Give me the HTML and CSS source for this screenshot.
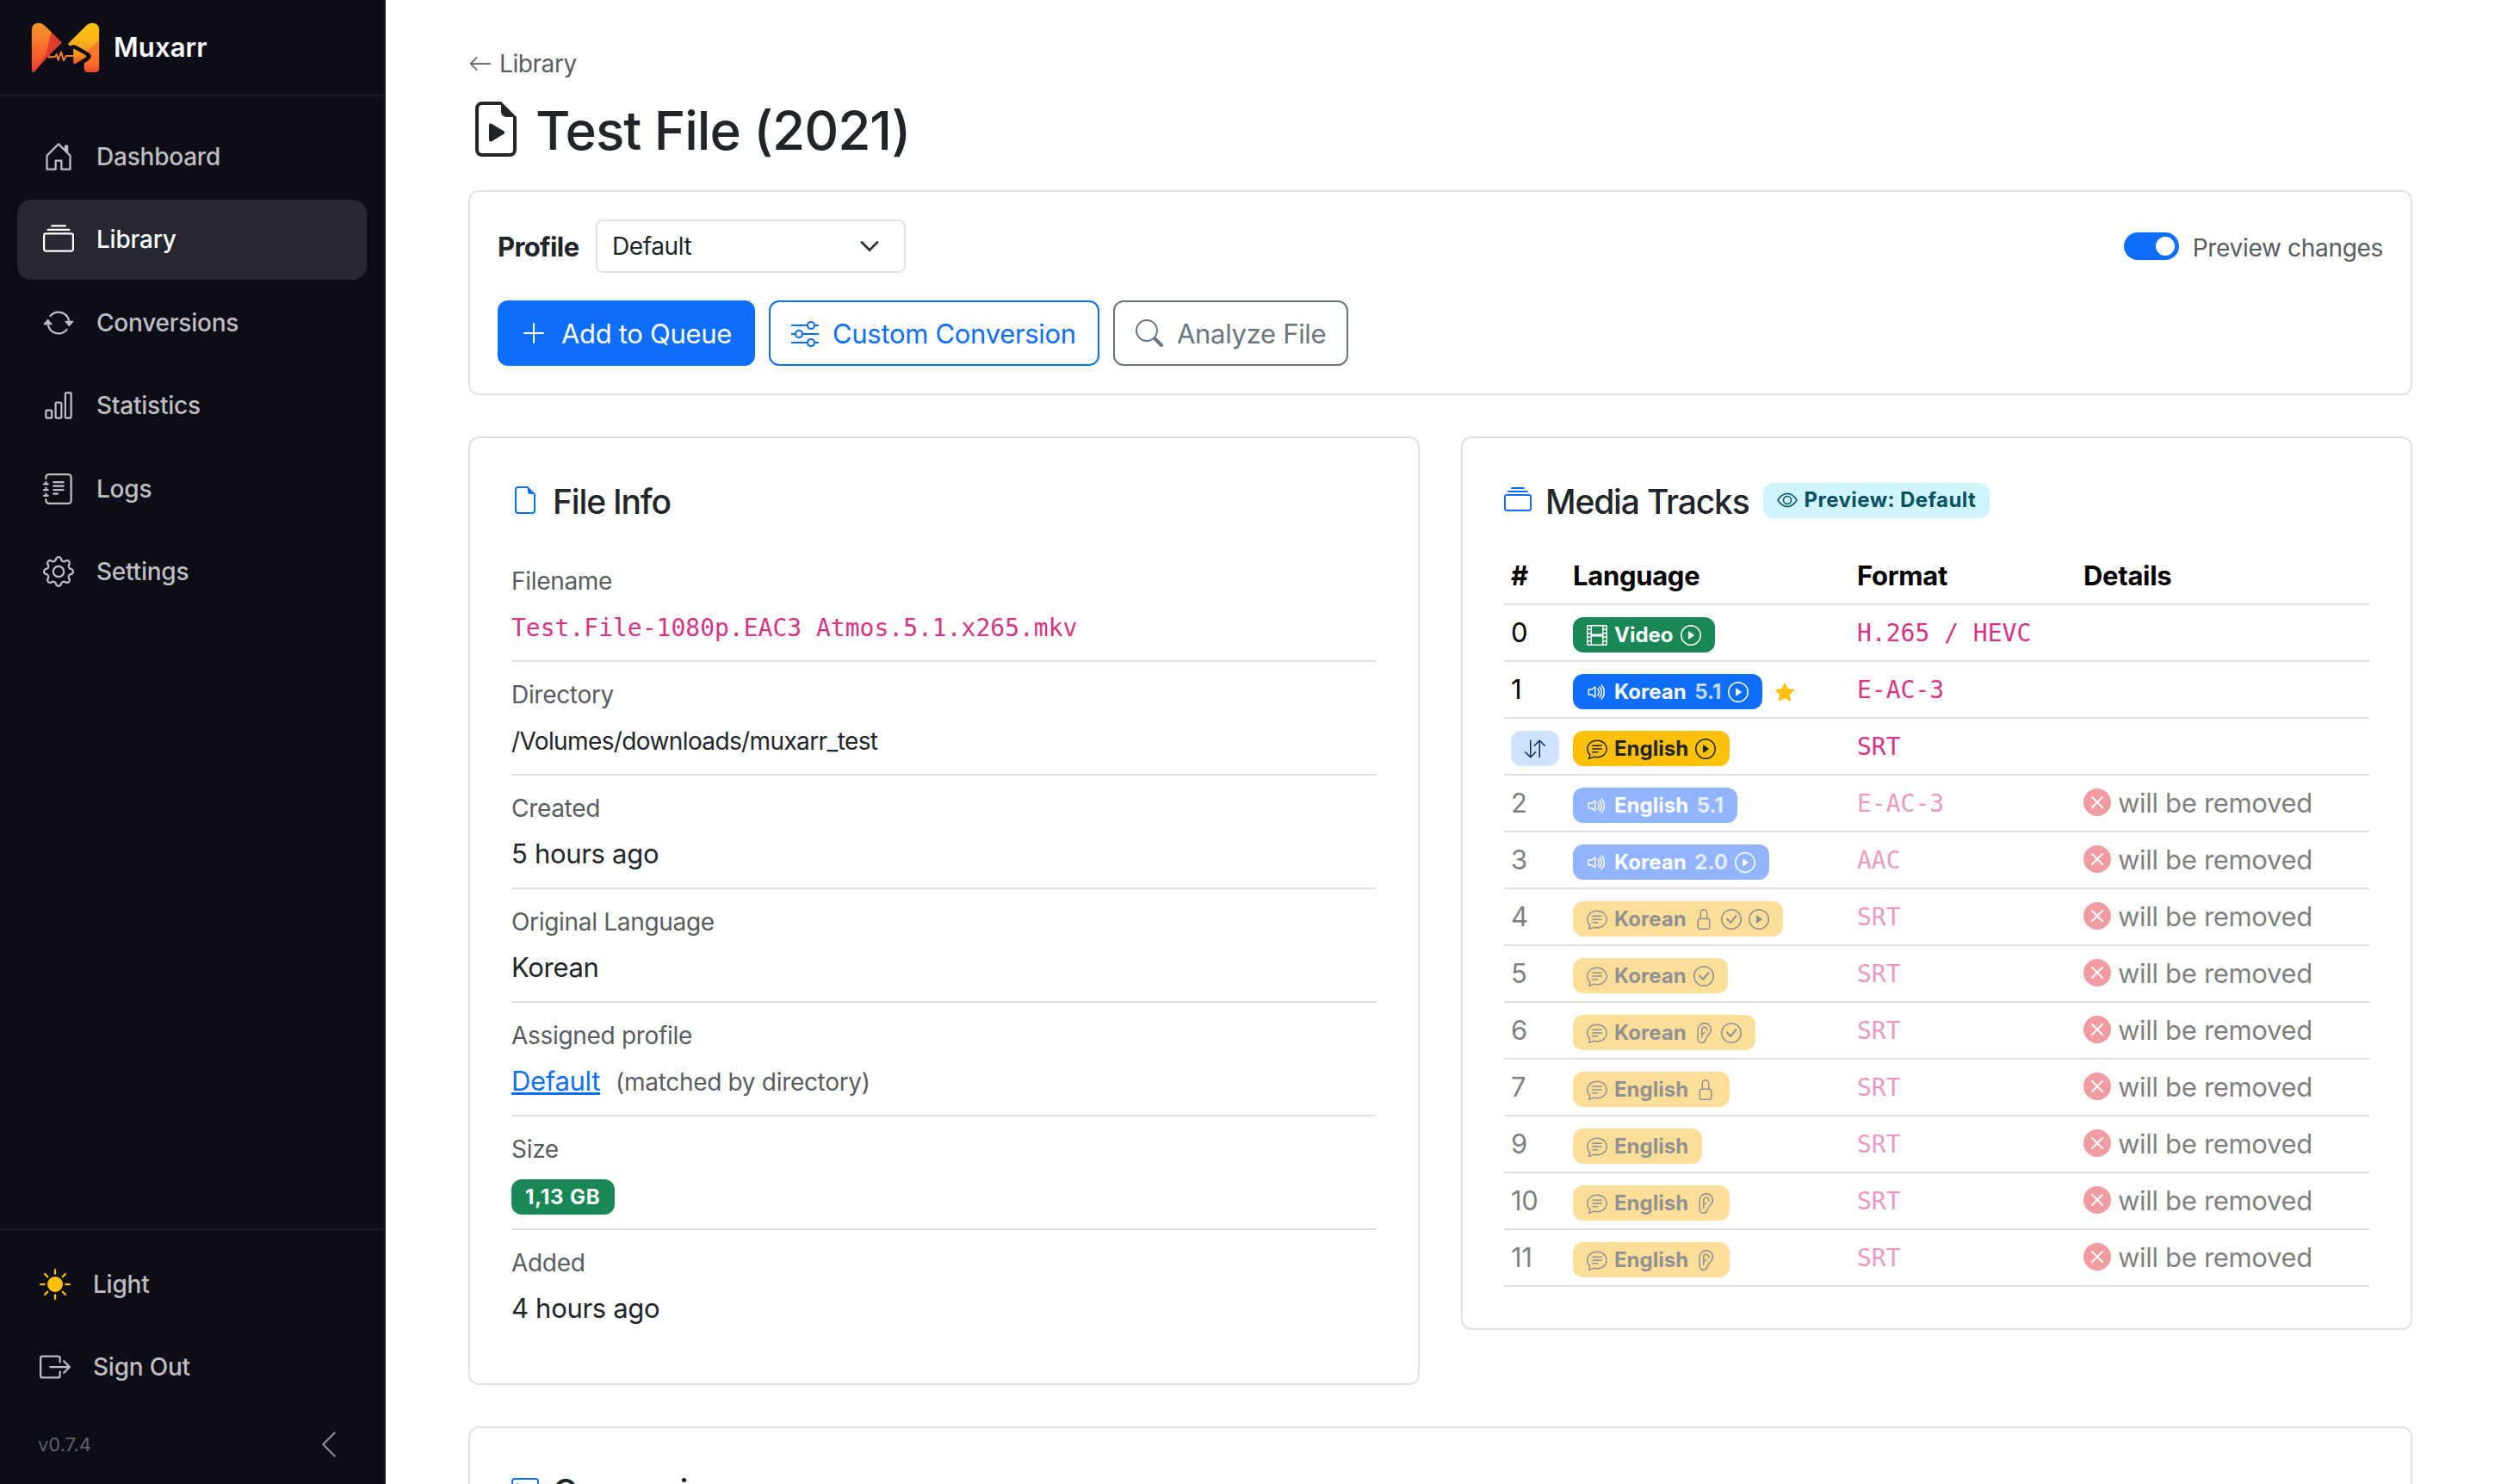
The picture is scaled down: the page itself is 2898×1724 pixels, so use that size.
FILE: index.html
```html
<!DOCTYPE html>
<html lang="en">
<head>
    <meta charset="UTF-8">
    <meta name="viewport" content="width=device-width, initial-scale=1.0">
    <title>Test File (2021) - Muxarr</title>
    <link rel="stylesheet" href="styles.css">
</head>
<body>
    <!-- icons -->
    <svg class="sprite" xmlns="http://www.w3.org/2000/svg">
        <symbol id="house" viewBox="0 0 16 16"><path d="M8.354 1.146a.5.5 0 0 0-.708 0l-6 6A.5.5 0 0 0 1.5 7.5v7a.5.5 0 0 0 .5.5h4.5a.5.5 0 0 0 .5-.5v-4h2v4a.5.5 0 0 0 .5.5H14a.5.5 0 0 0 .5-.5v-7a.5.5 0 0 0-.146-.354L13 5.793V2.5a.5.5 0 0 0-.5-.5h-1a.5.5 0 0 0-.5.5v1.293zM2.5 14V7.707l5.5-5.5 5.5 5.5V14H10v-4a.5.5 0 0 0-.5-.5h-3a.5.5 0 0 0-.5.5v4z"/></symbol>
        <symbol id="collection" viewBox="0 0 16 16"><path d="M2.5 3.5a.5.5 0 0 1 0-1h11a.5.5 0 0 1 0 1zm2-2a.5.5 0 0 1 0-1h7a.5.5 0 0 1 0 1zM0 13a1.5 1.5 0 0 0 1.5 1.5h13A1.5 1.5 0 0 0 16 13V6a1.5 1.5 0 0 0-1.5-1.5h-13A1.5 1.5 0 0 0 0 6zm1.5.5A.5.5 0 0 1 1 13V6a.5.5 0 0 1 .5-.5h13a.5.5 0 0 1 .5.5v7a.5.5 0 0 1-.5.5z"/></symbol>
        <symbol id="repeat" viewBox="0 0 16 16"><path d="M11.534 7h3.932a.25.25 0 0 1 .192.41l-1.966 2.36a.25.25 0 0 1-.384 0l-1.966-2.36a.25.25 0 0 1 .192-.41m-11 2h3.932a.25.25 0 0 0 .192-.41L2.692 6.23a.25.25 0 0 0-.384 0L.342 8.59A.25.25 0 0 0 .534 9"/><path d="M8 3c-1.552 0-2.94.707-3.857 1.818a.5.5 0 1 1-.771-.636A6.002 6.002 0 0 1 13.917 7H12.9A5 5 0 0 0 8 3M3.1 9a5.002 5.002 0 0 0 8.757 2.182.5.5 0 1 1 .771.636A6.002 6.002 0 0 1 2.083 9z"/></symbol>
        <symbol id="bars" viewBox="0 0 16 16"><path d="M4 11H2v3h2zm5-4H7v7h2zm5-5v12h-2V2zm-2-1a1 1 0 0 0-1 1v12a1 1 0 0 0 1 1h2a1 1 0 0 0 1-1V2a1 1 0 0 0-1-1zM6 7a1 1 0 0 1 1-1h2a1 1 0 0 1 1 1v7a1 1 0 0 1-1 1H7a1 1 0 0 1-1-1zm-5 4a1 1 0 0 1 1-1h2a1 1 0 0 1 1 1v3a1 1 0 0 1-1 1H2a1 1 0 0 1-1-1z"/></symbol>
        <symbol id="journal" viewBox="0 0 16 16"><path d="M5 10.5a.5.5 0 0 1 .5-.5h2a.5.5 0 0 1 0 1h-2a.5.5 0 0 1-.5-.5m0-2a.5.5 0 0 1 .5-.5h5a.5.5 0 0 1 0 1h-5a.5.5 0 0 1-.5-.5m0-2a.5.5 0 0 1 .5-.5h5a.5.5 0 0 1 0 1h-5a.5.5 0 0 1-.5-.5m0-2a.5.5 0 0 1 .5-.5h5a.5.5 0 0 1 0 1h-5a.5.5 0 0 1-.5-.5"/><path d="M3 0h10a2 2 0 0 1 2 2v12a2 2 0 0 1-2 2H3a2 2 0 0 1-2-2v-1h1v1a1 1 0 0 0 1 1h10a1 1 0 0 0 1-1V2a1 1 0 0 0-1-1H3a1 1 0 0 0-1 1v1H1V2a2 2 0 0 1 2-2"/><path d="M1 5v-.5a.5.5 0 0 1 1 0V5h.5a.5.5 0 0 1 0 1h-2a.5.5 0 0 1 0-1zm0 3v-.5a.5.5 0 0 1 1 0V8h.5a.5.5 0 0 1 0 1h-2a.5.5 0 0 1 0-1zm0 3v-.5a.5.5 0 0 1 1 0v.5h.5a.5.5 0 0 1 0 1h-2a.5.5 0 0 1 0-1z"/></symbol>
        <symbol id="gear" viewBox="0 0 16 16"><path d="M8 4.754a3.246 3.246 0 1 0 0 6.492 3.246 3.246 0 0 0 0-6.492M5.754 8a2.246 2.246 0 1 1 4.492 0 2.246 2.246 0 0 1-4.492 0"/><path d="M9.796 1.343c-.527-1.79-3.065-1.79-3.592 0l-.094.319a.873.873 0 0 1-1.255.52l-.292-.16c-1.64-.892-3.433.902-2.54 2.541l.159.292a.873.873 0 0 1-.52 1.255l-.319.094c-1.79.527-1.79 3.065 0 3.592l.319.094a.873.873 0 0 1 .52 1.255l-.16.292c-.892 1.64.901 3.434 2.541 2.54l.292-.159a.873.873 0 0 1 1.255.52l.094.319c.527 1.79 3.065 1.79 3.592 0l.094-.319a.873.873 0 0 1 1.255-.52l.292.16c1.64.893 3.434-.902 2.54-2.541l-.159-.292a.873.873 0 0 1 .52-1.255l.319-.094c1.79-.527 1.79-3.065 0-3.592l-.319-.094a.873.873 0 0 1-.52-1.255l.16-.292c.893-1.64-.902-3.433-2.541-2.54l-.292.159a.873.873 0 0 1-1.255-.52zm-2.633.283c.246-.835 1.428-.835 1.674 0l.094.319a1.873 1.873 0 0 0 2.693 1.115l.291-.16c.764-.415 1.6.42 1.184 1.185l-.159.292a1.873 1.873 0 0 0 1.116 2.692l.318.094c.835.246.835 1.428 0 1.674l-.319.094a1.873 1.873 0 0 0-1.115 2.693l.16.291c.415.764-.42 1.6-1.185 1.184l-.291-.159a1.873 1.873 0 0 0-2.693 1.116l-.094.318c-.246.835-1.428.835-1.674 0l-.094-.319a1.873 1.873 0 0 0-2.692-1.115l-.292.16c-.764.415-1.6-.42-1.184-1.185l.159-.291A1.873 1.873 0 0 0 1.945 8.93l-.319-.094c-.835-.246-.835-1.428 0-1.674l.319-.094A1.873 1.873 0 0 0 3.06 4.377l-.16-.292c-.415-.764.42-1.6 1.185-1.184l.292.159a1.873 1.873 0 0 0 2.692-1.115z"/></symbol>
        <symbol id="sun" viewBox="0 0 16 16"><path d="M8 12a4 4 0 1 0 0-8 4 4 0 0 0 0 8M8 0a.5.5 0 0 1 .5.5v2a.5.5 0 0 1-1 0v-2A.5.5 0 0 1 8 0m0 13a.5.5 0 0 1 .5.5v2a.5.5 0 0 1-1 0v-2A.5.5 0 0 1 8 13m8-5a.5.5 0 0 1-.5.5h-2a.5.5 0 0 1 0-1h2a.5.5 0 0 1 .5.5M3 8a.5.5 0 0 1-.5.5h-2a.5.5 0 0 1 0-1h2A.5.5 0 0 1 3 8m10.657-5.657a.5.5 0 0 1 0 .707l-1.414 1.415a.5.5 0 1 1-.707-.708l1.414-1.414a.5.5 0 0 1 .707 0m-9.193 9.193a.5.5 0 0 1 0 .707L3.05 13.657a.5.5 0 0 1-.707-.707l1.414-1.414a.5.5 0 0 1 .707 0m9.193 2.121a.5.5 0 0 1-.707 0l-1.414-1.414a.5.5 0 0 1 .707-.707l1.414 1.414a.5.5 0 0 1 0 .707M4.464 4.465a.5.5 0 0 1-.707 0L2.343 3.05a.5.5 0 1 1 .707-.707l1.414 1.414a.5.5 0 0 1 0 .708"/></symbol>
        <symbol id="logout" viewBox="0 0 16 16"><path d="M10 12.5a.5.5 0 0 1-.5.5h-8a.5.5 0 0 1-.5-.5v-9a.5.5 0 0 1 .5-.5h8a.5.5 0 0 1 .5.5v2a.5.5 0 0 0 1 0v-2A1.5 1.5 0 0 0 9.5 2h-8A1.5 1.5 0 0 0 0 3.5v9A1.5 1.5 0 0 0 1.5 14h8a1.5 1.5 0 0 0 1.5-1.5v-2a.5.5 0 0 0-1 0z"/><path d="M15.854 8.354a.5.5 0 0 0 0-.708l-3-3a.5.5 0 0 0-.708.708L14.293 7.5H5.5a.5.5 0 0 0 0 1h8.793l-2.147 2.146a.5.5 0 0 0 .708.708z"/></symbol>
        <symbol id="chevron-left" viewBox="0 0 16 16"><path d="M11.354 1.646a.5.5 0 0 1 0 .708L5.707 8l5.647 5.646a.5.5 0 0 1-.708.708l-6-6a.5.5 0 0 1 0-.708l6-6a.5.5 0 0 1 .708 0"/></symbol>
        <symbol id="arrow-left" viewBox="0 0 16 16"><path d="M15 8a.5.5 0 0 0-.5-.5H2.707l3.147-3.146a.5.5 0 1 0-.708-.708l-4 4a.5.5 0 0 0 0 .708l4 4a.5.5 0 0 0 .708-.708L2.707 8.5H14.5A.5.5 0 0 0 15 8"/></symbol>
        <symbol id="file-play" viewBox="0 0 16 16"><path d="M6 6.883v4.234a.5.5 0 0 0 .757.429l3.528-2.117a.5.5 0 0 0 0-.858L6.757 6.454a.5.5 0 0 0-.757.43z"/><path d="M14 14V4.5L9.5 0H4a2 2 0 0 0-2 2v12a2 2 0 0 0 2 2h8a2 2 0 0 0 2-2M9.5 3A1.5 1.5 0 0 0 11 4.5h2V14a1 1 0 0 1-1 1H4a1 1 0 0 1-1-1V2a1 1 0 0 1 1-1h5.5z"/></symbol>
        <symbol id="file" viewBox="0 0 16 16"><path d="M14 4.5V14a2 2 0 0 1-2 2H4a2 2 0 0 1-2-2V2a2 2 0 0 1 2-2h5.5zm-3 0A1.5 1.5 0 0 1 9.5 3V1H4a1 1 0 0 0-1 1v12a1 1 0 0 0 1 1h8a1 1 0 0 0 1-1V4.5z"/></symbol>
        <symbol id="plus" viewBox="0 0 16 16"><path d="M8 2a.5.5 0 0 1 .5.5v5h5a.5.5 0 0 1 0 1h-5v5a.5.5 0 0 1-1 0v-5h-5a.5.5 0 0 1 0-1h5v-5A.5.5 0 0 1 8 2"/></symbol>
        <symbol id="sliders" viewBox="0 0 16 16"><path fill-rule="evenodd" d="M11.5 2a1.5 1.5 0 1 0 0 3 1.5 1.5 0 0 0 0-3M9.05 3a2.5 2.5 0 0 1 4.9 0H16v1h-2.05a2.5 2.5 0 0 1-4.9 0H0V3zM4.5 7a1.5 1.5 0 1 0 0 3 1.5 1.5 0 0 0 0-3M2.05 8a2.5 2.5 0 0 1 4.9 0H16v1H6.95a2.5 2.5 0 0 1-4.9 0H0V8zm9.45 4a1.5 1.5 0 1 0 0 3 1.5 1.5 0 0 0 0-3m-2.45 1a2.5 2.5 0 0 1 4.9 0H16v1h-2.05a2.5 2.5 0 0 1-4.9 0H0v-1z"/></symbol>
        <symbol id="search" viewBox="0 0 16 16"><path d="M11.742 10.344a6.5 6.5 0 1 0-1.397 1.398h-.001q.044.06.098.115l3.85 3.85a1 1 0 0 0 1.415-1.414l-3.85-3.85a1 1 0 0 0-.115-.1zM12 6.5a5.5 5.5 0 1 1-11 0 5.5 5.5 0 0 1 11 0"/></symbol>
        <symbol id="eye" viewBox="0 0 16 16"><path d="M16 8s-3-5.5-8-5.5S0 8 0 8s3 5.5 8 5.5S16 8 16 8M1.173 8a13 13 0 0 1 1.66-2.043C4.12 4.668 5.88 3.5 8 3.5s3.879 1.168 5.168 2.457A13 13 0 0 1 14.828 8q-.086.13-.195.288c-.335.48-.83 1.12-1.465 1.755C11.879 11.332 10.119 12.5 8 12.5s-3.879-1.168-5.168-2.457A13 13 0 0 1 1.172 8z"/><path d="M8 5.5a2.5 2.5 0 1 0 0 5 2.5 2.5 0 0 0 0-5M4.5 8a3.5 3.5 0 1 1 7 0 3.5 3.5 0 0 1-7 0"/></symbol>
        <symbol id="film" viewBox="0 0 16 16"><path d="M0 1a1 1 0 0 1 1-1h14a1 1 0 0 1 1 1v14a1 1 0 0 1-1 1H1a1 1 0 0 1-1-1zm4 0v6h8V1zm8 8H4v6h8zM1 1v2h2V1zm2 3H1v2h2zM1 7v2h2V7zm2 3H1v2h2zm-2 3v2h2v-2zM15 1h-2v2h2zm-2 3v2h2V4zm2 3h-2v2h2zm-2 3v2h2v-2zm2 3h-2v2h2z"/></symbol>
        <symbol id="play" viewBox="0 0 16 16"><path d="M8 15A7 7 0 1 1 8 1a7 7 0 0 1 0 14m0 1A8 8 0 1 0 8 0a8 8 0 0 0 0 16"/><path d="M6.271 5.055a.5.5 0 0 1 .52.038l3.5 2.5a.5.5 0 0 1 0 .814l-3.5 2.5A.5.5 0 0 1 6 10.5v-5a.5.5 0 0 1 .271-.445"/></symbol>
        <symbol id="check" viewBox="0 0 16 16"><path d="M8 15A7 7 0 1 1 8 1a7 7 0 0 1 0 14m0 1A8 8 0 1 0 8 0a8 8 0 0 0 0 16"/><path d="m10.97 4.97-.02.022-3.473 4.425-2.093-2.094a.75.75 0 0 0-1.06 1.06L6.97 11.03a.75.75 0 0 0 1.079-.02l3.992-4.99a.75.75 0 0 0-1.071-1.05"/></symbol>
        <symbol id="volume" viewBox="0 0 16 16"><path d="M11.536 14.01A8.47 8.47 0 0 0 14.026 8a8.47 8.47 0 0 0-2.49-6.01l-.708.707A7.48 7.48 0 0 1 13.025 8c0 2.071-.84 3.946-2.197 5.303z"/><path d="M10.121 12.596A6.48 6.48 0 0 0 12.025 8a6.48 6.48 0 0 0-1.904-4.596l-.707.707A5.48 5.48 0 0 1 11.025 8a5.48 5.48 0 0 1-1.61 3.89z"/><path d="M10.025 8a4.5 4.5 0 0 1-1.318 3.182L8 10.475A3.5 3.5 0 0 0 9.025 8c0-.966-.392-1.841-1.025-2.475l.707-.707A4.5 4.5 0 0 1 10.025 8M7 4a.5.5 0 0 0-.812-.39L3.825 5.5H1.5A.5.5 0 0 0 1 6v4a.5.5 0 0 0 .5.5h2.325l2.363 1.89A.5.5 0 0 0 7 12zM4.312 6.39 6 5.04v5.92L4.312 9.61A.5.5 0 0 0 4 9.5H2v-3h2a.5.5 0 0 0 .312-.11"/></symbol>
        <symbol id="chat" viewBox="0 0 16 16"><path d="M2.678 11.894a1 1 0 0 1 .287.801 11 11 0 0 1-.398 2c1.395-.323 2.247-.697 2.634-.893a1 1 0 0 1 .71-.074A8 8 0 0 0 8 14c3.996 0 7-2.807 7-6s-3.004-6-7-6-7 2.808-7 6c0 1.468.617 2.83 1.678 3.894m-.493 3.905a22 22 0 0 1-.713.129c-.2.032-.352-.176-.273-.362a10 10 0 0 0 .244-.637l.003-.01c.248-.72.45-1.548.524-2.319C.743 11.37 0 9.76 0 8c0-3.866 3.582-7 8-7s8 3.134 8 7-3.582 7-8 7a9 9 0 0 1-2.347-.306c-.52.263-1.639.742-3.468 1.105"/><path d="M4 5.5a.5.5 0 0 1 .5-.5h7a.5.5 0 0 1 0 1h-7a.5.5 0 0 1-.5-.5M4 8a.5.5 0 0 1 .5-.5h7a.5.5 0 0 1 0 1h-7A.5.5 0 0 1 4 8m0 2.5a.5.5 0 0 1 .5-.5h4a.5.5 0 0 1 0 1h-4a.5.5 0 0 1-.5-.5"/></symbol>
        <symbol id="lock" viewBox="0 0 16 16"><path d="M8 1a2 2 0 0 1 2 2v4H6V3a2 2 0 0 1 2-2m3 6V3a3 3 0 0 0-6 0v4a2 2 0 0 0-2 2v5a2 2 0 0 0 2 2h6a2 2 0 0 0 2-2V9a2 2 0 0 0-2-2M5 8h6a1 1 0 0 1 1 1v5a1 1 0 0 1-1 1H5a1 1 0 0 1-1-1V9a1 1 0 0 1 1-1"/></symbol>
        <symbol id="ear" viewBox="0 0 16 16"><path d="M8.5 1A4.5 4.5 0 0 0 4 5.5v7.047a2.453 2.453 0 0 0 4.75.861l.512-1.363a5.6 5.6 0 0 1 .816-1.46l2.008-2.581A4.34 4.34 0 0 0 8.66 1zM3 5.5A5.5 5.5 0 0 1 8.5 0h.16a5.34 5.34 0 0 1 4.215 8.618l-2.008 2.581a4.6 4.6 0 0 0-.67 1.197l-.51 1.363A3.453 3.453 0 0 1 3 12.547zM8.5 4A1.5 1.5 0 0 0 7 5.5v2.695q.168-.09.332-.192c.327-.208.577-.44.72-.727a.5.5 0 1 1 .895.448c-.256.513-.673.865-1.079 1.123A9 9 0 0 1 7 9.313V11.5a.5.5 0 0 1-1 0v-6a2.5 2.5 0 0 1 5 0V6a.5.5 0 0 1-1 0v-.5A1.5 1.5 0 0 0 8.5 4"/></symbol>
        <symbol id="star" viewBox="0 0 16 16"><path d="M3.612 15.443c-.386.198-.824-.149-.746-.592l.83-4.73L.173 6.765c-.329-.314-.158-.888.283-.95l4.898-.696L7.538.792c.197-.39.73-.39.927 0l2.184 4.327 4.898.696c.441.062.612.636.282.95l-3.522 3.356.83 4.73c.078.443-.36.79-.746.592L8 13.187l-4.389 2.256z"/></symbol>
        <symbol id="down-up" viewBox="0 0 16 16"><path d="M11.5 15a.5.5 0 0 0 .5-.5V2.707l3.146 3.147a.5.5 0 0 0 .708-.708l-4-4a.5.5 0 0 0-.708 0l-4 4a.5.5 0 1 0 .708.708L11 2.707V14.5a.5.5 0 0 0 .5.5m-7-14a.5.5 0 0 1 .5.5v11.793l3.146-3.147a.5.5 0 0 1 .708.708l-4 4a.5.5 0 0 1-.708 0l-4-4a.5.5 0 0 1 .708-.708L4 13.293V1.5a.5.5 0 0 1 .5-.5"/></symbol>
        <symbol id="x-circle" viewBox="0 0 16 16"><path d="M16 8A8 8 0 1 1 0 8a8 8 0 0 1 16 0M5.354 4.646a.5.5 0 1 0-.708.708L7.293 8l-2.647 2.646a.5.5 0 0 0 .708.708L8 8.707l2.646 2.647a.5.5 0 0 0 .708-.708L8.707 8l2.647-2.646a.5.5 0 0 0-.708-.708L8 7.293z"/></symbol>
        <symbol id="terminal" viewBox="0 0 16 16"><path d="M6 9a.5.5 0 0 1 .5-.5h3a.5.5 0 0 1 0 1h-3A.5.5 0 0 1 6 9M3.854 4.146a.5.5 0 1 0-.708.708L4.793 6.5 3.146 8.146a.5.5 0 1 0 .708.708l2-2a.5.5 0 0 0 0-.708z"/><path d="M2 1a2 2 0 0 0-2 2v10a2 2 0 0 0 2 2h12a2 2 0 0 0 2-2V3a2 2 0 0 0-2-2zm12 1a1 1 0 0 1 1 1v10a1 1 0 0 1-1 1H2a1 1 0 0 1-1-1V3a1 1 0 0 1 1-1z"/></symbol>
    </svg>

    <aside class="sidebar">
        <div class="brand">
            <svg class="logo" viewBox="108 76 240 178">
                <defs>
                    <linearGradient id="g1" x1="0" y1="0" x2="0" y2="1">
                        <stop offset="0" stop-color="#f39a2b"/>
                        <stop offset=".5" stop-color="#fb6d2a"/>
                        <stop offset=".75" stop-color="#f2592c"/>
                        <stop offset="1" stop-color="#dd3a30"/>
                    </linearGradient>
                    <linearGradient id="g2" x1="0" y1="0" x2="0" y2="1">
                        <stop offset="0" stop-color="#fdc20f"/>
                        <stop offset=".3" stop-color="#fcb915"/>
                        <stop offset=".6" stop-color="#f5912a"/>
                        <stop offset=".8" stop-color="#fb6d2a"/>
                        <stop offset="1" stop-color="#e5482e"/>
                    </linearGradient>
                    <linearGradient id="g3" x1="0" y1="0" x2="0" y2="1">
                        <stop offset="0" stop-color="#fcb915"/>
                        <stop offset="1" stop-color="#f4502c"/>
                    </linearGradient>
                </defs>
                <path fill="#df3d30" d="M176 108L216 147L172 190L176 194L163 200L120 249Q110 256 110 243Z"/>
                <path fill="url(#g1)" d="M110 100Q112 78 134 78Q146 78 156 88L179 110Q170 140 162 182Q146 206 118 246Q110 252 110 243Z"/>
                <path fill="url(#g2)" d="M238 150L298 90Q308 78 324 78Q346 80 346 102V240Q346 251 334 251H306Q294 251 294 240V219L312 207Q324 196 312 184L268 158Q256 152 246 158Q238 158 238 150Z"/>
                <path fill="#fb6d2a" opacity=".75" d="M346 138L304 178L314 185Q324 196 312 207L294 219V232H346Z"/>
                <path fill="url(#g3)" d="M256 168L299 191Q304 195 299 199L263 221Q256 224 256 217Z"/>
                <path fill="none" stroke="#f5822a" stroke-width="6" stroke-linejoin="round" d="M168 198L192 196L197 188L203 208L213 180L222 210L230 194H256"/>
            </svg>
            <span class="brand-name">Muxarr</span>
        </div>

        <nav class="nav">
            <a class="nav-link"><svg class="icon"><use href="#house"/></svg><span>Dashboard</span></a>
            <a class="nav-link active"><svg class="icon"><use href="#collection"/></svg><span>Library</span></a>
            <a class="nav-link"><svg class="icon"><use href="#repeat"/></svg><span>Conversions</span></a>
            <a class="nav-link"><svg class="icon"><use href="#bars"/></svg><span>Statistics</span></a>
            <a class="nav-link"><svg class="icon"><use href="#journal"/></svg><span>Logs</span></a>
            <a class="nav-link"><svg class="icon"><use href="#gear"/></svg><span>Settings</span></a>
        </nav>

        <div class="sidebar-footer">
            <a class="nav-link"><svg class="icon sun"><use href="#sun"/></svg><span>Light</span></a>
            <a class="nav-link"><svg class="icon"><use href="#logout"/></svg><span>Sign Out</span></a>
            <div class="version">
                <span>v0.7.4</span>
                <svg class="icon"><use href="#chevron-left"/></svg>
            </div>
        </div>
    </aside>

    <main class="content">
        <a class="back"><svg class="icon"><use href="#arrow-left"/></svg><span>Library</span></a>
        <h1 class="page-title"><svg class="icon"><use href="#file-play"/></svg><span>Test File (2021)</span></h1>

        <section class="card toolbar">
            <div class="toolbar-row">
                <div class="profile">
                    <label>Profile</label>
                    <div class="select">
                        <span>Default</span>
                        <svg viewBox="0 0 16 16"><path d="m2 5 6 6 6-6"/></svg>
                    </div>
                </div>
                <div class="preview">
                    <span class="switch"><i></i></span>
                    <span class="preview-text">Preview changes</span>
                </div>
            </div>
            <div class="buttons">
                <button class="btn btn-primary"><svg class="icon"><use href="#plus"/></svg><span>Add to Queue</span></button>
                <button class="btn btn-outline"><svg class="icon"><use href="#sliders"/></svg><span>Custom Conversion</span></button>
                <button class="btn btn-secondary"><svg class="icon"><use href="#search"/></svg><span>Analyze File</span></button>
            </div>
        </section>

        <div class="columns">
            <section class="card info">
                <h5 class="card-title"><svg class="icon"><use href="#file"/></svg><span class="title-text">File Info</span></h5>
                <div class="info-row">
                    <div class="info-label">Filename</div>
                    <div class="info-value"><code>Test.File-1080p.EAC3 Atmos.5.1.x265.mkv</code></div>
                </div>
                <div class="info-row">
                    <div class="info-label">Directory</div>
                    <div class="info-value"><small class="path">/Volumes/downloads/muxarr_test</small></div>
                </div>
                <div class="info-row">
                    <div class="info-label">Created</div>
                    <div class="info-value">5 hours ago</div>
                </div>
                <div class="info-row">
                    <div class="info-label">Original Language</div>
                    <div class="info-value">Korean</div>
                </div>
                <div class="info-row">
                    <div class="info-label">Assigned profile</div>
                    <div class="info-value"><a class="link">Default</a><small class="muted">(matched by directory)</small></div>
                </div>
                <div class="info-row">
                    <div class="info-label">Size</div>
                    <div class="info-value"><span class="badge green size">1,13 GB</span></div>
                </div>
                <div class="info-row">
                    <div class="info-label">Added</div>
                    <div class="info-value">4 hours ago</div>
                </div>
            </section>

            <section class="card tracks">
                <h5 class="card-title"><svg class="icon"><use href="#collection"/></svg><span class="title-text">Media Tracks</span><span class="badge cyan"><svg class="icon"><use href="#eye"/></svg><span>Preview: Default</span></span></h5>
                <table>
                    <thead>
                        <tr><th class="c-num">#</th><th class="c-lang">Language</th><th class="c-format">Format</th><th>Details</th></tr>
                    </thead>
                    <tbody>
                        <tr>
                            <td>0</td>
                            <td><span class="badge green"><svg class="icon"><use href="#film"/></svg><span>Video</span><svg class="icon"><use href="#play"/></svg></span></td>
                            <td><code>H.265 / HEVC</code></td>
                            <td></td>
                        </tr>
                        <tr>
                            <td>1</td>
                            <td><span class="badge blue"><svg class="icon"><use href="#volume"/></svg><span>Korean <em>5.1</em></span><svg class="icon"><use href="#play"/></svg></span><svg class="star"><use href="#star"/></svg></td>
                            <td><code>E-AC-3</code></td>
                            <td></td>
                        </tr>
                        <tr>
                            <td><span class="badge order"><svg class="icon"><use href="#down-up"/></svg></span></td>
                            <td><span class="badge yellow"><svg class="icon"><use href="#chat"/></svg><span>English</span><svg class="icon"><use href="#play"/></svg></span></td>
                            <td><code>SRT</code></td>
                            <td></td>
                        </tr>
                        <tr class="removed">
                            <td>2</td>
                            <td><span class="badge blue"><svg class="icon"><use href="#volume"/></svg><span>English <em>5.1</em></span></span></td>
                            <td><code>E-AC-3</code></td>
                            <td><svg class="x"><use href="#x-circle"/></svg>will be removed</td>
                        </tr>
                        <tr class="removed">
                            <td>3</td>
                            <td><span class="badge blue"><svg class="icon"><use href="#volume"/></svg><span>Korean <em>2.0</em></span><svg class="icon"><use href="#play"/></svg></span></td>
                            <td><code>AAC</code></td>
                            <td><svg class="x"><use href="#x-circle"/></svg>will be removed</td>
                        </tr>
                        <tr class="removed">
                            <td>4</td>
                            <td><span class="badge yellow"><svg class="icon"><use href="#chat"/></svg><span>Korean</span><svg class="icon"><use href="#lock"/></svg><svg class="icon"><use href="#check"/></svg><svg class="icon"><use href="#play"/></svg></span></td>
                            <td><code>SRT</code></td>
                            <td><svg class="x"><use href="#x-circle"/></svg>will be removed</td>
                        </tr>
                        <tr class="removed">
                            <td>5</td>
                            <td><span class="badge yellow"><svg class="icon"><use href="#chat"/></svg><span>Korean</span><svg class="icon"><use href="#check"/></svg></span></td>
                            <td><code>SRT</code></td>
                            <td><svg class="x"><use href="#x-circle"/></svg>will be removed</td>
                        </tr>
                        <tr class="removed">
                            <td>6</td>
                            <td><span class="badge yellow"><svg class="icon"><use href="#chat"/></svg><span>Korean</span><svg class="icon"><use href="#ear"/></svg><svg class="icon"><use href="#check"/></svg></span></td>
                            <td><code>SRT</code></td>
                            <td><svg class="x"><use href="#x-circle"/></svg>will be removed</td>
                        </tr>
                        <tr class="removed">
                            <td>7</td>
                            <td><span class="badge yellow"><svg class="icon"><use href="#chat"/></svg><span>English</span><svg class="icon"><use href="#lock"/></svg></span></td>
                            <td><code>SRT</code></td>
                            <td><svg class="x"><use href="#x-circle"/></svg>will be removed</td>
                        </tr>
                        <tr class="removed">
                            <td>9</td>
                            <td><span class="badge yellow"><svg class="icon"><use href="#chat"/></svg><span>English</span></span></td>
                            <td><code>SRT</code></td>
                            <td><svg class="x"><use href="#x-circle"/></svg>will be removed</td>
                        </tr>
                        <tr class="removed">
                            <td>10</td>
                            <td><span class="badge yellow"><svg class="icon"><use href="#chat"/></svg><span>English</span><svg class="icon"><use href="#ear"/></svg></span></td>
                            <td><code>SRT</code></td>
                            <td><svg class="x"><use href="#x-circle"/></svg>will be removed</td>
                        </tr>
                        <tr class="removed">
                            <td>11</td>
                            <td><span class="badge yellow"><svg class="icon"><use href="#chat"/></svg><span>English</span><svg class="icon"><use href="#ear"/></svg></span></td>
                            <td><code>SRT</code></td>
                            <td><svg class="x"><use href="#x-circle"/></svg>will be removed</td>
                        </tr>
                    </tbody>
                </table>
            </section>
        </div>

        <section class="card conversions">
            <h5 class="card-title"><svg class="icon"><use href="#terminal"/></svg><span class="title-text">Conversions</span></h5>
        </section>
    </main>
</body>
</html>
```
FILE: styles.css
```css
*{
    margin:0;
    padding:0;
    box-sizing: border-box;
}
body{
    display:flex;
    height:1724px;
    overflow:hidden;
    background-color: #fff;
    color:#212529;
    font-family: Inter, "Liberation Sans", sans-serif;
    font-size: 31px;
    line-height: 48px;
    letter-spacing: -0.01em;
}
.sprite{
    display: none;
}
.icon{
    flex:none;
    width:32px;
    height:32px;
    fill:currentColor;
}

/* sidebar */
.sidebar{
    flex:none;
    display:flex;
    flex-direction: column;
    width:448px;
    height:1724px;
    background-color: #0d0d18;
    border-right:2px solid #1c1c27;
}
.brand{
    display:flex;
    align-items: center;
    height:112px;
    padding-left:36px;
    border-bottom:2px solid #1c1c27;
}
.logo{
    width:80px;
    height:59px;
}
.brand-name{
    margin-left:16px;
    color:#fff;
    font-size: 31px;
    font-weight: 600;
    letter-spacing: 0.005em;
}
.nav{
    flex:1;
    display:flex;
    flex-direction: column;
    gap:3.4px;
    padding:23.5px 20px 0;
}
.nav-link{
    display:flex;
    align-items: center;
    gap:26px;
    height:93px;
    padding-left:30px;
    border-radius: 16px;
    color:#bebec1;
    font-size: 28px;
    font-weight: 500;
    letter-spacing: -0.008em;
}
.nav-link .icon{
    width:36px;
    height:36px;
}
.nav-link.active{
    background-color: #272731;
    color:#fff;
}
.sidebar-footer{
    display:flex;
    flex-direction: column;
    gap:3.4px;
    height:297px;
    padding:16px 16px 0;
    border-top:2px solid #1c1c27;
}
.sun{
    color:#ffc107;
}
.version{
    display:flex;
    align-items: center;
    justify-content: space-between;
    height:80px;
    padding:0 30px 0 28px;
    color:#606066;
    font-size: 22px;
    letter-spacing: 0;
}
.version .icon{
    width:36px;
    height:36px;
    color:#8a8a8f;
}

/* content */
.content{
    flex:1;
    padding:53px 96px 0;
}
.back{
    display:flex;
    align-items: center;
    height:42px;
    gap:8px;
    color:#595c5f;
    font-size: 28px;
    letter-spacing: -0.015em;
}
.back .icon{
    width:28px;
    height:28px;
}
.page-title{
    display:flex;
    align-items: center;
    gap:14px;
    height:78px;
    margin:16px 0 32px;
    font-size: 62px;
    font-weight: 500;
    letter-spacing: -0.017em;
}
.page-title span{
    padding-top:3px;
}
.page-title .icon{
    width:64px;
    height:64px;
}
.card{
    border:2px solid #dee2e6;
    border-radius: 12px;
    background-color: #fff;
}
.toolbar{
    height:238px;
    padding:32px;
}
.toolbar-row{
    display:flex;
    justify-content: space-between;
    height:62px;
    margin-bottom:32px;
}
.profile{
    display:flex;
    align-items: center;
    gap:16px;
}
.profile label{
    width:98px;
    padding-top:1px;
    font-weight: 700;
    letter-spacing: -0.02em;
}
.select{
    display:flex;
    align-items: center;
    justify-content: space-between;
    width:360px;
    height:62px;
    padding:0 28px 0 17px;
    border:2px solid #dee2e6;
    border-radius: 8px;
    font-size: 28px;
    letter-spacing: -0.015em;
}
.select svg{
    width:24px;
    height:24px;
    fill:none;
    stroke:#343a40;
    stroke-width: 2;
    stroke-linecap: round;
    stroke-linejoin: round;
}
.preview{
    display:flex;
    align-items: center;
    gap:16px;
    color:#595c5f;
    font-size: 28px;
}
.preview-text{
    padding-top:4px;
}
.switch{
    display:flex;
    align-items: center;
    justify-content: flex-end;
    width:64px;
    height:32px;
    padding-right:5px;
    border-radius: 16px;
    background-color: #0d6efd;
}
.switch i{
    width:22px;
    height:22px;
    border-radius: 50%;
    background-color: #fff;
}
.buttons{
    display:flex;
    gap:16px;
}
.btn{
    display:flex;
    align-items: center;
    gap:16px;
    height:76px;
    padding:0 24px;
    border:2px solid #0d6efd;
    border-radius: 12px;
    background-color: #fff;
    color:#0d6efd;
    font-family: inherit;
    font-size: 31px;
    letter-spacing: -0.01em;
    white-space: nowrap;
}
.btn-primary{
    width:299px;
    background-color: #0d6efd;
    color:#fff;
}
.btn-outline{
    width:384px;
}
.btn-secondary{
    width:273px;
    border-color: #6c757d;
    color:#6c757d;
}
.columns{
    display:grid;
    grid-template-columns: 1fr 1fr;
    gap:48px;
    align-items: start;
    margin:48px 0;
}
.columns .card, .conversions{
    padding:48px;
}
.card-title{
    display:flex;
    align-items: center;
    height:48px;
    margin-bottom:32px;
    font-size: 39px;
    font-weight: 500;
}
.card-title .icon{
    color:#0d6efd;
}
.title-text{
    margin-left:16px;
    padding-top:3px;
    letter-spacing: -0.03em;
}
.info-row{
    padding:17px 0 15px;
    border-bottom:2px solid #dee2e6;
}
.info-row:last-child{
    border-bottom:none;
}
.info-label{
    height:42px;
    margin-bottom:8px;
    color:#595c5f;
    font-size: 28px;
    line-height: 42px;
}
.info-value{
    height:48px;
    white-space: nowrap;
}
code{
    color:#d63384;
    font-family: "DejaVu Sans Mono", monospace;
    font-size: 28px;
    letter-spacing: 0;
}
small{
    font-size: 28px;
}
.path{
    letter-spacing: -0.022em;
}
.muted{
    margin-left:18px;
    color:#595c5f;
}
.link{
    color:#0d6efd;
    text-decoration: underline;
}
.badge{
    display:inline-flex;
    align-items: center;
    gap:8px;
    height:41px;
    padding:0 16px;
    border-radius: 12px;
    font-size: 24px;
    font-weight: 700;
    line-height: 24px;
    vertical-align: middle;
    letter-spacing: 0;
}
.badge .icon{
    width:24px;
    height:24px;
    color:inherit;
}
.badge em{
    margin-left:4px;
    font-style: normal;
    opacity: .75;
}
.green{
    background-color: #198754;
    color:#fff;
}
.blue{
    background-color: #0d6efd;
    color:#fff;
}
.yellow{
    background-color: #ffc107;
    color:#212529;
}
.cyan{
    margin-left:16px;
    background-color: #cff4fc;
    color:#055160;
    letter-spacing: 0.018em;
}
.size{
    letter-spacing: 0.035em;
}
.order{
    background-color: #cfe2ff;
    color:#052c65;
}

/* tracks table */
table{
    width:100%;
    margin-top:-1px;
    border-collapse: collapse;
    table-layout: fixed;
    color:#000;
}
tr{
    height:66px;
    border-bottom:2px solid #dee2e6;
}
th, td{
    padding:0 8px;
    text-align: left;
    vertical-align: middle;
    white-space: nowrap;
}
th{
    font-weight: 700;
}
.c-num{
    width:72px;
}
.c-lang{
    width:330px;
}
.c-format{
    width:263px;
}
.removed td{
    opacity: .5;
}
.removed .blue{
    background-color: #236bff;
}
.removed .yellow{
    background-color: #fdbf35;
}
.star{
    width:22px;
    height:22px;
    margin-left:15px;
    fill:#ffc107;
    vertical-align: middle;
}
.x{
    width:32px;
    height:32px;
    margin-right:8px;
    fill:#e53947;
    vertical-align: -4px;
}
```
